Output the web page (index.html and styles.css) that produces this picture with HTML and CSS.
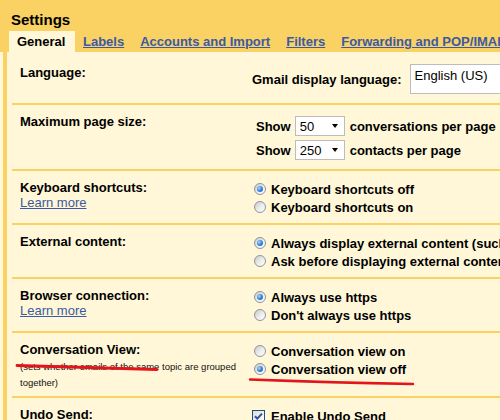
FILE: index.html
```html
<!DOCTYPE html>
<html>
<head>
<meta charset="utf-8">
<link rel="stylesheet" href="styles.css">
</head>
<body>
<div class="top">
  <h1 class="title">Settings</h1>
  <nav class="tabs">
    <span class="tab active">General</span>
    <a class="tab">Labels</a>
    <a class="tab">Accounts and Import</a>
    <a class="tab">Filters</a>
    <a class="tab">Forwarding and POP/IMAP</a>
  </nav>
</div>
<div class="panel">
  <div class="row first">
    <div class="label lang-label">Language:</div>
    <div class="lang">Gmail display language: <div class="bigselect">English (US)</div></div>
  </div>
  <div class="row">
    <div class="label">Maximum page size:</div>
    <div class="opts">
      <div class="show-line">Show <div class="sel"><span>50</span><i class="arrow"></i></div> conversations per page</div>
      <div class="show-line">Show <div class="sel"><span>250</span><i class="arrow"></i></div> contacts per page</div>
    </div>
  </div>
  <div class="row">
    <div class="label">Keyboard shortcuts:<a class="learn">Learn more</a></div>
    <div class="opts">
      <div class="opt"><span class="radio on"></span>Keyboard shortcuts off</div>
      <div class="opt"><span class="radio"></span>Keyboard shortcuts on</div>
    </div>
  </div>
  <div class="row">
    <div class="label">External content:</div>
    <div class="opts">
      <div class="opt"><span class="radio on"></span>Always display external content (such as images) sent by trusted senders</div>
      <div class="opt"><span class="radio"></span>Ask before displaying external content</div>
    </div>
  </div>
  <div class="row">
    <div class="label">Browser connection:<a class="learn">Learn more</a></div>
    <div class="opts">
      <div class="opt"><span class="radio on"></span>Always use https</div>
      <div class="opt"><span class="radio"></span>Don't always use https</div>
    </div>
  </div>
  <div class="row conv">
    <div class="label">Conversation View:<div class="note">(sets whether emails of the same topic are grouped together)</div></div>
    <div class="opts">
      <div class="opt"><span class="radio"></span>Conversation view on</div>
      <div class="opt"><span class="radio on"></span>Conversation view off</div>
    </div>
  </div>
  <div class="row">
    <div class="label">Undo Send:</div>
    <div class="opts">
      <div class="opt"><span class="check"><svg width="11" height="11" viewBox="0 0 11 11"><path d="M2 5.2 L4.3 7.6 L9 2.6" fill="none" stroke="#2d4f9e" stroke-width="2"/></svg></span>Enable Undo Send</div>
    </div>
  </div>
</div>
<svg class="marks" width="500" height="420" viewBox="0 0 500 420">
  <path d="M17 365.5 L157 369.5" stroke="#e3141b" stroke-width="2.8" fill="none" stroke-linecap="round"/>
  <path d="M250 379.5 Q330 382.5 413 384" stroke="#e3141b" stroke-width="2.4" fill="none" stroke-linecap="round"/>
</svg>
</body>
</html>
```
FILE: styles.css
```css
html, body {
  margin: 0;
  padding: 0;
  overflow: hidden;
}
body {
  width: 500px;
  height: 420px;
  position: relative;
  background: #fff7d7;
  font-family: "Liberation Sans", Arial, sans-serif;
  font-size: 13px;
  color: #000;
}
.top {
  background: #fad163;
  padding-top: 11px;
}
.title {
  margin: 0;
  padding-left: 11px;
  font-size: 15px;
  line-height: 18px;
  font-weight: bold;
}
.tabs {
  display: flex;
  margin-top: 2px;
  padding-left: 9px;
  white-space: nowrap;
}
.tab {
  padding: 0 8px;
  line-height: 21px;
  font-weight: bold;
  color: #3a5aa3;
  text-decoration: underline;
}
.tab.active {
  padding: 0 9px 0 8px;
  min-width: 49px;
  background: #fff7d7;
  color: #000;
  text-decoration: none;
}
.panel {
  margin-left: 3px;
  border-left: 4px solid #fad163;
}
.row {
  display: grid;
  grid-template-columns: 240px 1fr;
  margin-left: 5px;
  padding: 9px 0 7px;
  border-bottom: 2px solid #fad163;
  white-space: nowrap;
}
.row.first {
  padding: 12px 0 9px;
}
.row.conv {
  padding-bottom: 5px;
}
.label {
  padding-left: 8px;
  font-weight: bold;
  line-height: 15px;
}
.lang-label {
  margin-top: 1px;
}
.learn {
  display: block;
  font-weight: normal;
  color: #3a5aa3;
  text-decoration: underline;
}
.note {
  font-weight: normal;
  font-size: 9.5px;
  line-height: 16px;
  margin-top: 2px;
  white-space: normal;
  color: #111;
}
.lang {
  display: flex;
  align-items: center;
  font-weight: bold;
}
.bigselect {
  margin-left: 8px;
  width: 120px;
  height: 30px;
  box-sizing: border-box;
  border: 1px solid #bdbdbd;
  background: #fff;
  padding: 3px 4px;
  font-weight: normal;
  line-height: 15px;
  flex: none;
}
.opts {
  font-weight: bold;
}
.show-line {
  display: flex;
  align-items: center;
  height: 24px;
  padding-left: 4px;
}
.sel {
  width: 50px;
  height: 20px;
  box-sizing: border-box;
  margin: 0 5px 0 4px;
  padding: 0 6px 0 4px;
  border: 1px solid #bcbcbc;
  background: #fff;
  display: flex;
  align-items: center;
  justify-content: space-between;
  font-weight: normal;
  flex: none;
}
.arrow {
  width: 0;
  height: 0;
  border-left: 3.5px solid transparent;
  border-right: 3.5px solid transparent;
  border-top: 4px solid #000;
}
.opt {
  display: flex;
  align-items: center;
  height: 18px;
}
.radio {
  flex: none;
  width: 12px;
  height: 12px;
  box-sizing: border-box;
  margin: 0 5px 0 2px;
  border: 1px solid #8c96a0;
  border-radius: 50%;
  background: linear-gradient(135deg, #c9c9c6 0%, #eeeeec 55%, #ffffff 100%);
  display: grid;
  place-items: center;
}
.radio.on::after {
  content: "";
  width: 6px;
  height: 6px;
  border-radius: 50%;
  background: radial-gradient(circle at 35% 35%, #a9d8fb 0%, #3a85d6 50%, #1b4f9c 100%);
}
.check {
  flex: none;
  width: 13px;
  height: 13px;
  box-sizing: border-box;
  margin: 0 6px 0 0;
  border: 1px solid #1c5180;
  background: linear-gradient(135deg, #dcdcd7 0%, #ffffff 100%);
  display: grid;
  place-items: center;
}
.marks {
  position: absolute;
  left: 0;
  top: 0;
  pointer-events: none;
}
```
